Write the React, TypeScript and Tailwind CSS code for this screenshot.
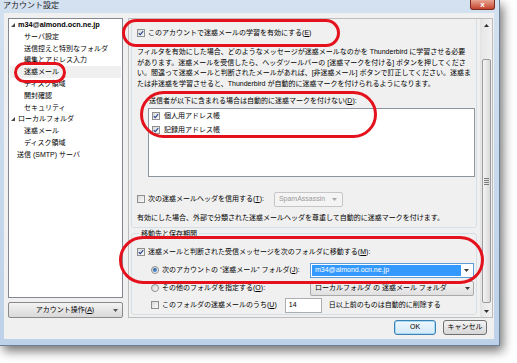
import React from "react";

const treeItems = [
  { label: "m34@almond.ocn.ne.jp", level: 0, arrow: true, bold: true },
  { label: "サーバ設定", level: 1 },
  { label: "送信控えと特別なフォルダ", level: 1 },
  { label: "編集とアドレス入力", level: 1 },
  { label: "迷惑メール", level: 1, selected: true },
  { label: "ディスク領域", level: 1 },
  { label: "開封確認", level: 1 },
  { label: "セキュリティ", level: 1 },
  { label: "ローカルフォルダ", level: 0, arrow: true },
  { label: "迷惑メール", level: 1 },
  { label: "ディスク領域", level: 1 },
  { label: "送信 (SMTP) サーバ", level: 2 },
];

function Check({ on = false }: { on?: boolean }) {
  return (
    <span className="flex h-[8px] w-[8px] shrink-0 items-center justify-center border border-[#8e8f8f] bg-gradient-to-br from-[#d9d9d9] to-[#fbfbfb]">
      {on && (
        <svg viewBox="0 0 8 8" className="h-[6px] w-[6px]">
          <path d="M1 4.3 L3.1 6.3 L7 1.4" fill="none" stroke="#2d4b8e" strokeWidth="1.5" />
        </svg>
      )}
    </span>
  );
}

function Radio({ on = false }: { on?: boolean }) {
  return (
    <span className="flex h-[8px] w-[8px] shrink-0 items-center justify-center rounded-full border border-[#8e8f8f] bg-gradient-to-br from-[#d6d6d6] to-[#fbfbfb]">
      {on && <span className="h-[4px] w-[4px] rounded-full bg-gradient-to-br from-[#1c4f8f] to-[#5da3e6]" />}
    </span>
  );
}

function Arrow({ up = false, color = "#3b3b3b" }: { up?: boolean; color?: string }) {
  return (
    <svg viewBox="0 0 5 3" className="h-[3px] w-[5px]">
      <path d={up ? "M0 3 L2.5 0 L5 3 Z" : "M0 0 L5 0 L2.5 3 Z"} fill={color} />
    </svg>
  );
}

export default function App() {
  return (
    <div className="relative h-[363px] w-[517px] overflow-hidden bg-white font-[family-name:'Liberation_Sans','Noto_Sans_CJK_JP',sans-serif] text-[7px] text-black">
      {/* window */}
      <div className="flex h-[346px] w-[500px] flex-col border-r border-b border-[#6b7f96] bg-gradient-to-b from-[#d3e1f0] to-[#bdd1e8] shadow-[3px_5px_10px_rgba(0,0,0,0.55)]">
        <div className="flex h-[13px] items-start">
          <span className="pl-[3px] text-[8px] leading-[12px] text-[#1b1b1b]">アカウント設定</span>
          <div className="mr-[4px] ml-auto flex h-[10px] w-[25px] items-center justify-center rounded-b-[3px] border border-t-0 border-[#7a2a1f] bg-gradient-to-b from-[#e8a493] to-[#c4422b] text-[8px] leading-[8px] font-bold text-white">
            x
          </div>
        </div>

        <div className="ml-[4px] mr-[5px] mb-[6px] flex flex-1 flex-col bg-[#f0f0f0]">
          <div className="flex h-[300px] gap-[5px] pt-[5px] pl-[4px] pr-[1px] box-content">
            {/* left column */}
            <div className="flex w-[115px] flex-col">
              <div className="flex h-[280px] flex-col border border-[#828790] bg-white">
                {treeItems.map((it, i) => (
                  <div
                    key={i}
                    className={
                      "mx-[1px] flex h-[11.8px] items-center whitespace-nowrap leading-[11.8px] " +
                      (it.selected ? "bg-[#f0f0f0] " : "") +
                      (it.level === 0 ? "pl-[1px]" : it.level === 1 ? "pl-[14px]" : "pl-[7px]")
                    }
                  >
                    {it.arrow && (
                      <svg viewBox="0 0 4 4" className="mr-[3px] h-[4px] w-[4px]">
                        <path d="M4 0 L4 4 L0 4 Z" fill="#4a4a4a" />
                      </svg>
                    )}
                    <span className={it.bold ? "text-[7.3px] font-bold" : ""}>{it.label}</span>
                  </div>
                ))}
              </div>
              <div className="mt-[4px] flex h-[16px] items-center rounded-[2px] border border-[#8a8a8a] bg-gradient-to-b from-[#f3f3f3] to-[#d9d9d9] px-[4px]">
                <span className="flex-1 pl-[4px] text-center leading-[10px]">
                  アカウント操作(<u>A</u>)
                </span>
                <Arrow color="#555" />
              </div>
            </div>

            {/* right pane */}
            <div className="flex flex-1 border border-[#bdbdbd]">
              <div className="flex-1 overflow-hidden">
                <div className="-mt-[9px] px-[1px]">
                  <fieldset className="ml-[1px] mr-[2px] rounded-[3px] border border-[#d5dfe5] pr-[1px] pb-[4px] pl-[5px]">
                    <legend className="ml-[2px] px-[2px] leading-[9px]">迷惑メールの設定</legend>
                    <div className="mt-[8px] flex h-[12px] items-center gap-[3px] whitespace-nowrap">
                      <Check on />
                      <span>
                        このアカウントで迷惑メールの学習を有効にする(<u>E</u>)
                      </span>
                    </div>
                    <p className="mt-[8px] whitespace-nowrap leading-[10.7px]">
                      フィルタを有効にした場合、どのようなメッセージが迷惑メールなのかを Thunderbird に学習させる必要
                      <br />
                      があります。迷惑メールを受信したら、ヘッダツールバーの [迷惑マークを付ける] ボタンを押してくださ
                      <br />
                      い。間違って迷惑メールと判断されたメールがあれば、[非迷惑メール] ボタンで訂正してください。迷惑ま
                      <br />
                      たは非迷惑を学習させると、Thunderbird が自動的に迷惑マークを付けられるようになります。
                    </p>
                    <div className="mt-[6px] flex h-[10px] items-center whitespace-nowrap pl-[12px]">
                      送信者が以下に含まれる場合は自動的に迷惑マークを付けない(<u>D</u>):
                    </div>
                    <div className="mt-[2px] ml-[11px] h-[69px] border border-[#8e959e] bg-white pl-[3px]">
                      <div className="flex h-[14px] items-center gap-[4px] whitespace-nowrap">
                        <Check on />
                        <span>個人用アドレス帳</span>
                      </div>
                      <div className="flex h-[14px] items-center gap-[4px] whitespace-nowrap">
                        <Check on />
                        <span>記録用アドレス帳</span>
                      </div>
                    </div>
                    <div className="mt-[15px] flex h-[15px] items-center whitespace-nowrap">
                      <Check />
                      <span className="ml-[3px]">
                        次の迷惑メールヘッダを信用する(<u>T</u>):
                      </span>
                      <div className="ml-[10px] flex h-[15px] w-[69px] items-center rounded-[2px] border border-[#c6c6c6] bg-[#f4f4f4] pl-[4px] pr-[5px] text-[#9a9a9a]">
                        <span className="flex-1">SpamAssassin</span>
                        <Arrow color="#a8a8a8" />
                      </div>
                    </div>
                    <div className="mt-[6px] whitespace-nowrap leading-[10px]">
                      有効にした場合、外部で分類された迷惑メールヘッダを尊重して自動的に迷惑マークを付けます。
                    </div>
                  </fieldset>

                  <fieldset className="mt-[1px] ml-[1px] mr-[2px] rounded-[3px] border border-[#d5dfe5] pr-[1px] pb-[1px] pl-[5px]">
                    <legend className="ml-[2px] px-[2px] leading-[9px]">移動先と保存期間</legend>
                    <div className="mt-[8px] flex h-[12px] items-center gap-[3px] whitespace-nowrap">
                      <Check on />
                      <span>
                        迷惑メールと判断された受信メッセージを次のフォルダに移動する(<u>M</u>):
                      </span>
                    </div>
                    <div className="mt-[5px] flex h-[15px] items-center gap-[3px] whitespace-nowrap pl-[14px]">
                      <Radio on />
                      <span>
                        次のアカウントの “迷惑メール” フォルダ(<u>J</u>):
                      </span>
                      <div className="mr-[1px] ml-auto flex h-[15px] w-[164px] items-center border border-[#5c9ad8] bg-white p-[1px]">
                        <div className="flex h-full flex-1 items-center bg-[#3399ff] pl-[3px] text-white">
                          m34@almond.ocn.ne.jp
                        </div>
                        <div className="flex w-[11px] items-center justify-center">
                          <Arrow />
                        </div>
                      </div>
                    </div>
                    <div className="mt-[3px] flex h-[15px] items-center gap-[3px] whitespace-nowrap pl-[14px]">
                      <Radio />
                      <span>
                        その他のフォルダを指定する(<u>O</u>):
                      </span>
                      <div className="mr-[1px] ml-auto flex h-[15px] w-[164px] items-center rounded-[2px] border border-[#a9a9a9] bg-gradient-to-b from-[#f4f4f4] to-[#e0e0e0] pl-[4px]">
                        <span className="flex-1">ローカルフォルダ の 迷惑メール フォルダ</span>
                        <div className="flex w-[12px] items-center justify-center">
                          <Arrow />
                        </div>
                      </div>
                    </div>
                    <div className="mt-[2px] flex h-[15px] items-center whitespace-nowrap pl-[14px]">
                      <Check />
                      <span className="ml-[3px]">
                        このフォルダの迷惑メールのうち(<u>U</u>)
                      </span>
                      <div className="ml-[8px] flex h-[15px] w-[37px] items-center border border-[#abadb3] bg-white pl-[3px]">
                        14
                      </div>
                      <span className="ml-[7px]">日以上前のものは自動的に削除する</span>
                    </div>
                  </fieldset>
                </div>
              </div>

              {/* scrollbar */}
              <div className="flex w-[12px] flex-col border-l border-[#e3e3e3] bg-gradient-to-r from-[#e6e6e6] to-[#f1f1f1]">
                <div className="flex h-[12px] items-center justify-center">
                  <Arrow up color="#2f2f2f" />
                </div>
                <div className="mx-[1px] mt-[28px] flex h-[244px] items-center justify-center rounded-[2px] border border-[#9b9b9b] bg-gradient-to-r from-[#f5f5f5] to-[#d9d9d9]">
                  <div className="flex w-[5px] flex-col gap-[1px]">
                    <div className="h-px bg-[#7a7a7a]" />
                    <div className="h-px bg-[#7a7a7a]" />
                    <div className="h-px bg-[#7a7a7a]" />
                    <div className="h-px bg-[#7a7a7a]" />
                  </div>
                </div>
                <div className="flex-1" />
                <div className="flex h-[12px] items-center justify-center">
                  <Arrow color="#2f2f2f" />
                </div>
              </div>
            </div>
          </div>

          {/* bottom buttons */}
          <div className="mt-[2px] flex justify-end gap-[7px] pr-[7px]">
            <div className="flex h-[15px] w-[42px] items-center justify-center rounded-[3px] border border-[#3c7fb1] bg-gradient-to-b from-[#eef7fd] to-[#d3e9f8] shadow-[inset_0_0_0_1px_#a6dbf6]">
              OK
            </div>
            <div className="flex h-[15px] w-[44px] items-center justify-center rounded-[3px] border border-[#707070] bg-gradient-to-b from-[#f3f3f3] to-[#d6d6d6]">
              キャンセル
            </div>
          </div>
        </div>
      </div>

      {/* red annotation marks */}
      <div className="absolute left-[14px] top-[62px] h-[21px] w-[52px] rounded-full border-[3px] border-[#e3121c]" />
      <div className="absolute left-[122px] top-[19px] h-[28px] w-[218px] rounded-full border-[3px] border-[#e3121c]" />
      <div className="absolute left-[140px] top-[91px] h-[47px] w-[237px] rounded-full border-[3px] border-[#e3121c]" />
      <div className="absolute left-[119px] top-[236px] h-[48px] w-[365px] rounded-full border-[3px] border-[#e3121c]" />
    </div>
  );
}
